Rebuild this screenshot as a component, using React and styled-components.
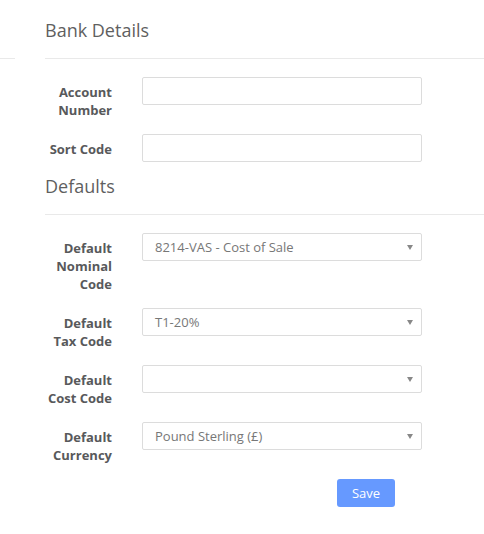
import styled, { createGlobalStyle } from "styled-components";

const GlobalStyle = createGlobalStyle`
  html, body {
    margin: 0;
    padding: 0;
    background: #ffffff;
  }
  body {
    font-family: "Open Sans", "Liberation Sans", Arial, sans-serif;
    font-size: 13px;
    color: #555;
  }
`;

const Page = styled.div`
  width: 484px;
  padding: 19px 0 0 45px;
  box-sizing: border-box;
`;

const Section = styled.section`
  display: flex;
  flex-direction: column;
  gap: 15px;
  margin-bottom: 13px;
`;

const HeaderRow = styled.div`
  display: flex;
  align-items: flex-end;
  margin-bottom: 3px;
`;

const Stub = styled.div`
  width: 15px;
  margin-left: -45px;
  margin-right: 30px;
  border-bottom: 1px solid #e9e9e9;
`;

const Heading = styled.h3`
  flex: 1;
  margin: 0;
  padding: 1px 0 18px;
  font-size: 18px;
  line-height: 20px;
  font-weight: 400;
  color: #5f5f5f;
  border-bottom: 1px solid #e9e9e9;
`;

const Row = styled.div`
  display: flex;
  align-items: flex-start;
  gap: 30px;
`;

const Label = styled.label`
  width: 67px;
  flex-shrink: 0;
  padding-top: 6px;
  text-align: right;
  font-weight: 700;
  font-size: 13px;
  line-height: 18px;
  color: #58595b;
`;

const Field = styled.div`
  width: 280px;
  height: 28px;
  box-sizing: border-box;
  border: 1px solid #dcdcdc;
  border-radius: 2px;
  background: #fff;
  display: flex;
  align-items: center;
  padding: 0 12px;
`;

const Value = styled.span`
  flex: 1;
  font-size: 13px;
  color: #777;
  white-space: nowrap;
`;

const Caret = styled.span`
  width: 0;
  height: 0;
  border-left: 3.5px solid transparent;
  border-right: 3.5px solid transparent;
  border-top: 5px solid #888;
  margin-right: -4px;
`;

const Actions = styled.div`
  padding: 2px 0 0 292px;
`;

const SaveButton = styled.button`
  width: 58px;
  height: 28px;
  border: none;
  border-radius: 3px;
  background: #6699ff;
  color: #fff;
  font-family: inherit;
  font-size: 13px;
  cursor: pointer;
`;

function TextRow({ label }) {
  return (
    <Row>
      <Label>{label}</Label>
      <Field />
    </Row>
  );
}

function SelectRow({ label, value }) {
  return (
    <Row>
      <Label>{label}</Label>
      <Field>
        <Value>{value}</Value>
        <Caret />
      </Field>
    </Row>
  );
}

export default function App() {
  return (
    <>
      <GlobalStyle />
      <Page>
        <Section>
          <HeaderRow>
            <Stub />
            <Heading>Bank Details</Heading>
          </HeaderRow>
          <TextRow label="Account Number" />
          <TextRow label="Sort Code" />
        </Section>

        <Section>
          <HeaderRow>
            <Heading>Defaults</Heading>
          </HeaderRow>
          <SelectRow label="Default Nominal Code" value="8214-VAS - Cost of Sale" />
          <SelectRow label="Default Tax Code" value="T1-20%" />
          <SelectRow label="Default Cost Code" value="" />
          <SelectRow label="Default Currency" value="Pound Sterling (£)" />
        </Section>

        <Actions>
          <SaveButton>Save</SaveButton>
        </Actions>
      </Page>
    </>
  );
}
